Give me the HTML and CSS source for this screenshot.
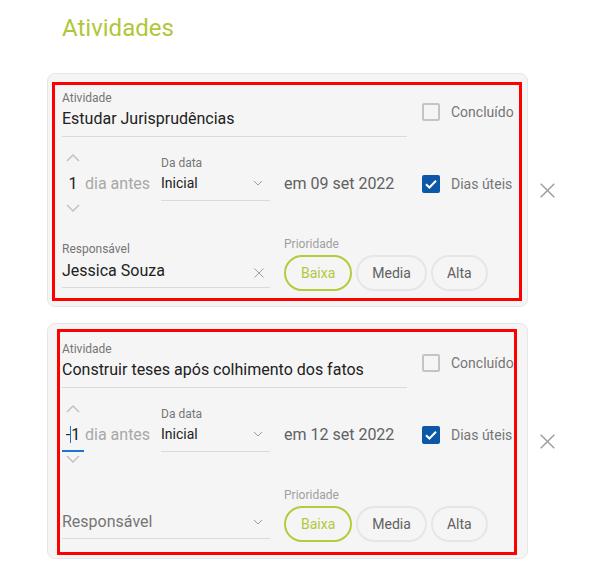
FILE: index.html
```html
<!DOCTYPE html>
<html lang="pt">
<head>
<meta charset="utf-8">
<title>Atividades</title>
<link rel="stylesheet" href="styles.css">
</head>
<body>
<div class="page">
  <h1 class="title">Atividades</h1>
  <div class="list">

    <div class="item">
      <div class="card">
        <div class="mark mark-a"></div>
        <div class="row row-top">
          <div class="field field-title">
            <div class="label">Atividade</div>
            <div class="value">Estudar Jurisprudências</div>
          </div>
          <div class="check check-top">
            <span class="box"></span><span>Concluído</span>
          </div>
        </div>
        <div class="row row-mid">
          <div class="stepper">
            <div class="chev"><svg width="14" height="8" viewBox="0 0 14 8"><path d="M1 7 L7 1 L13 7" fill="none" stroke="#c2c2c2" stroke-width="1.5"/></svg></div>
            <div class="num-line"><span class="num">1</span><span class="unit">dia antes</span></div>
            <div class="chev"><svg width="14" height="8" viewBox="0 0 14 8"><path d="M1 1 L7 7 L13 1" fill="none" stroke="#c2c2c2" stroke-width="1.5"/></svg></div>
          </div>
          <div class="field field-select">
            <div class="label">Da data</div>
            <div class="value value-sm"><span>Inicial</span><svg class="caret" width="10" height="6" viewBox="0 0 10 6"><path d="M1 1 L5 5 L9 1" fill="none" stroke="#9e9e9e" stroke-width="1"/></svg></div>
          </div>
          <div class="date">em 09 set 2022</div>
          <div class="check check-mid">
            <span class="box box-on"><svg width="14" height="14" viewBox="0 0 14 14"><path d="M2 7.2 L5.4 10.5 L12 3.8" fill="none" stroke="#fff" stroke-width="2"/></svg></span><span>Dias úteis</span>
          </div>
        </div>
        <div class="row row-bottom">
          <div class="field field-resp">
            <div class="label">Responsável</div>
            <div class="value value-resp"><span>Jessica Souza</span><svg class="clear" width="10" height="10" viewBox="0 0 10 10"><path d="M0.5 0.5 L9.5 9.5 M9.5 0.5 L0.5 9.5" fill="none" stroke="#9e9e9e" stroke-width="1"/></svg></div>
          </div>
          <div class="priority">
            <div class="plabel">Prioridade</div>
            <div class="chips">
              <span class="chip chip-on">Baixa</span>
              <span class="chip">Media</span>
              <span class="chip">Alta</span>
            </div>
          </div>
        </div>
      </div>
      <div class="remove"><svg width="15" height="15" viewBox="0 0 15 15"><path d="M0.7 0.7 L14.3 14.3 M14.3 0.7 L0.7 14.3" fill="none" stroke="#9e9e9e" stroke-width="1.5"/></svg></div>
    </div>

    <div class="item">
      <div class="card card-b">
        <div class="mark mark-b"></div>
        <div class="row row-top">
          <div class="field field-title">
            <div class="label">Atividade</div>
            <div class="value">Construir teses após colhimento dos fatos</div>
          </div>
          <div class="check check-top">
            <span class="box"></span><span>Concluído</span>
          </div>
        </div>
        <div class="row row-mid">
          <div class="stepper">
            <div class="chev"><svg width="14" height="8" viewBox="0 0 14 8"><path d="M1 7 L7 1 L13 7" fill="none" stroke="#c2c2c2" stroke-width="1.5"/></svg></div>
            <div class="num-line"><span class="num num-active">-<span class="cursor"></span>1</span><span class="unit">dia antes</span></div>
            <div class="chev"><svg width="14" height="8" viewBox="0 0 14 8"><path d="M1 1 L7 7 L13 1" fill="none" stroke="#c2c2c2" stroke-width="1.5"/></svg></div>
          </div>
          <div class="field field-select">
            <div class="label">Da data</div>
            <div class="value value-sm"><span>Inicial</span><svg class="caret" width="10" height="6" viewBox="0 0 10 6"><path d="M1 1 L5 5 L9 1" fill="none" stroke="#9e9e9e" stroke-width="1"/></svg></div>
          </div>
          <div class="date">em 12 set 2022</div>
          <div class="check check-mid">
            <span class="box box-on"><svg width="14" height="14" viewBox="0 0 14 14"><path d="M2 7.2 L5.4 10.5 L12 3.8" fill="none" stroke="#fff" stroke-width="2"/></svg></span><span>Dias úteis</span>
          </div>
        </div>
        <div class="row row-bottom">
          <div class="field field-resp field-empty">
            <div class="value placeholder"><span>Responsável</span><svg class="caret" width="10" height="6" viewBox="0 0 10 6"><path d="M1 1 L5 5 L9 1" fill="none" stroke="#9e9e9e" stroke-width="1"/></svg></div>
          </div>
          <div class="priority">
            <div class="plabel">Prioridade</div>
            <div class="chips">
              <span class="chip chip-on">Baixa</span>
              <span class="chip">Media</span>
              <span class="chip">Alta</span>
            </div>
          </div>
        </div>
      </div>
      <div class="remove"><svg width="15" height="15" viewBox="0 0 15 15"><path d="M0.7 0.7 L14.3 14.3 M14.3 0.7 L0.7 14.3" fill="none" stroke="#9e9e9e" stroke-width="1.5"/></svg></div>
    </div>

  </div>
</div>
</body>
</html>
```

FILE: styles.css
```css
* { box-sizing: border-box; }

body {
  margin: 0;
  background: #fff;
  color: #212121;
  font-family: Roboto, "Liberation Sans", sans-serif;
}

.page { padding: 14px 0 0 47px; }

.title {
  margin: 0 0 0 15px;
  font-size: 24px;
  line-height: 28px;
  font-weight: 400;
  color: #afc73a;
}

.list {
  margin-top: 31px;
  display: flex;
  flex-direction: column;
  gap: 16px;
}

.item {
  display: flex;
  align-items: center;
  gap: 12px;
}

.card {
  position: relative;
  width: 481px;
  border: 1px solid #e6e6e6;
  border-radius: 8px;
  background: #f5f5f5;
  padding: 0 0 15px 14px;
}

.card-b { padding-top: 1px; padding-bottom: 16px; }

.mark {
  position: absolute;
  border: 3px solid #ff0000;
  pointer-events: none;
}
.mark-a { left: 4px; top: 8px; right: 5px; bottom: 5px; }
.mark-b { left: 9px; top: 5px; right: 10px; bottom: 3px; }

.row { display: flex; align-items: flex-start; }
.row-top { height: 63px; }
.row-mid { height: 78px; }

.field { border-bottom: 1px solid #dadada; }

.label {
  font-size: 12px;
  line-height: 14px;
  color: #757575;
}

.value {
  margin-top: 4px;
  font-size: 16px;
  line-height: 20px;
  color: #212121;
  display: flex;
  align-items: center;
  justify-content: space-between;
  white-space: nowrap;
}

.field-title { width: 345px; padding: 17px 0 7px; }

.check {
  display: flex;
  align-items: center;
  gap: 11px;
  font-size: 14px;
  line-height: 18px;
  color: #757575;
}
.check-top { margin: 29px 0 0 15px; }
.check-mid { margin-top: 38px; }

.box {
  width: 18px;
  height: 18px;
  border: 2px solid #c4c4c4;
  border-radius: 2px;
  display: flex;
  align-items: center;
  justify-content: center;
}
.box-on { background: #0d57a8; border-color: #0d57a8; }

.stepper { width: 99px; padding-top: 14px; }

.chev {
  width: 22px;
  height: 14px;
  display: flex;
  align-items: center;
  justify-content: center;
}

.num-line { display: flex; align-items: flex-start; margin-top: 9px; }

.num {
  width: 22px;
  text-align: center;
  font-size: 16px;
  line-height: 20px;
  color: #212121;
  padding-bottom: 5px;
  border-bottom: 2px solid transparent;
}
.num-active { border-bottom-color: #1976d2; }

.cursor {
  display: inline-block;
  width: 1px;
  height: 17px;
  background: #1976d2;
  vertical-align: -3px;
}

.unit {
  margin-left: 1px;
  font-size: 16px;
  line-height: 20px;
  color: #a8a8a8;
}

.field-select { width: 109px; padding: 19px 0 7px; }
.value-sm { margin-top: 3px; font-size: 14px; }
.caret { margin-right: 7px; flex: none; }

.date {
  width: 138px;
  margin: 37px 0 0 14px;
  font-size: 16px;
  line-height: 20px;
  color: #616161;
}

.field-resp { width: 208px; padding: 27px 0 6px; }
.value-resp { margin-top: 5px; }
.field-empty { padding-top: 46px; }
.clear { margin: 3px 6px 0 0; flex: none; }
.placeholder { margin-top: 0; color: #757575; }

.priority { margin-left: 14px; padding-top: 22px; }

.plabel {
  font-size: 12px;
  line-height: 14px;
  color: #a0a0a0;
}

.chips { display: flex; gap: 4px; margin-top: 4px; }

.chip {
  height: 36px;
  padding: 0 14px;
  border: 2px solid #e6e6e6;
  border-radius: 18px;
  font-size: 14px;
  line-height: 32px;
  color: #616161;
}
.chip-on { padding: 0 15px; border-color: #b5cb3d; color: #b2c83c; }

.remove {
  width: 15px;
  height: 15px;
  display: flex;
}
```
